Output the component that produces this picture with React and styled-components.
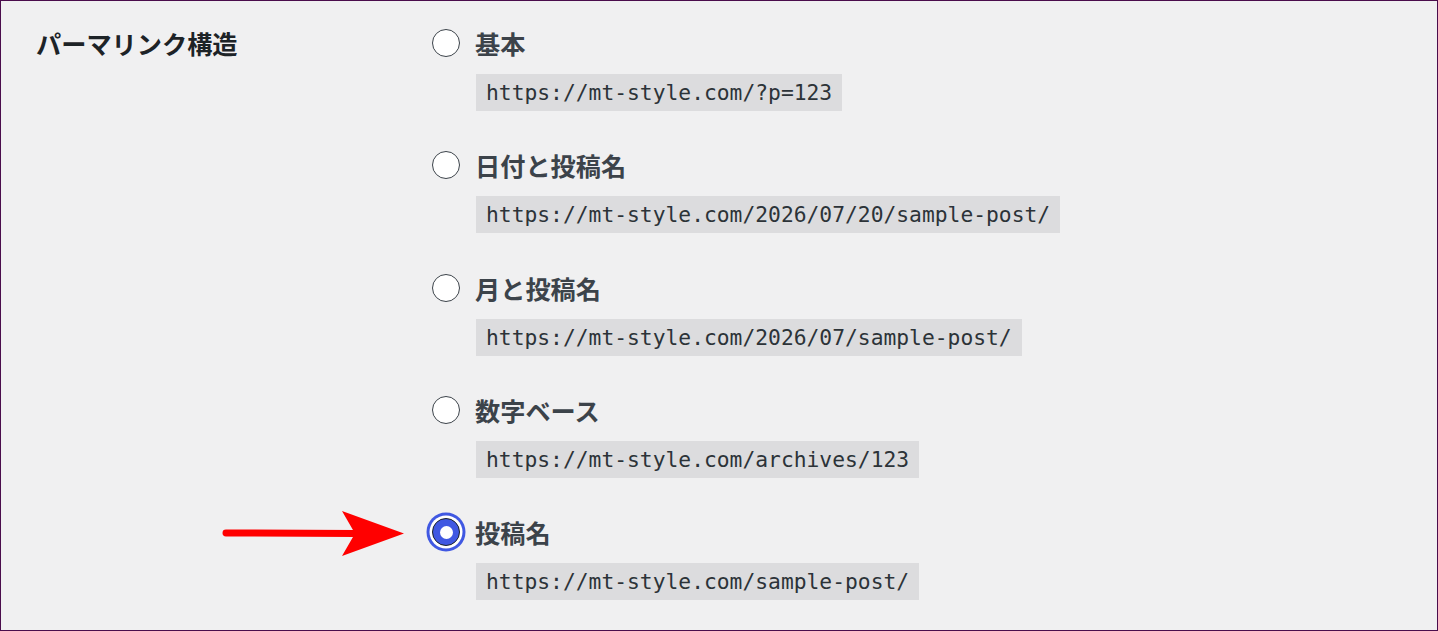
import React from "react";
import styled, { createGlobalStyle } from "styled-components";

const Global = createGlobalStyle`
  html, body { margin: 0; padding: 0; background: #f0f0f1; }
  * { box-sizing: border-box; }
`;

const Frame = styled.div`
  width: 1438px;
  height: 631px;
  border: 1px solid #4a0d4c;
  background: #f0f0f1;
  display: grid;
  grid-template-columns: 396px 1fr;
  padding: 22px 0 0 35px;
  font-family: "Noto Sans CJK JP", "Noto Sans", sans-serif;
  position: relative;
  overflow: hidden;
`;

const Heading = styled.h2`
  margin: 0;
  font-size: 25.2px;
  font-weight: 700;
  color: #1d2327;
  line-height: 40px;
  height: 40px;
`;

const Options = styled.div`
  display: flex;
  flex-direction: column;
  gap: 34.25px;
`;

const Option = styled.div`
  display: flex;
  flex-direction: column;
  align-items: flex-start;
  gap: 11px;
`;

const LabelRow = styled.label`
  display: flex;
  align-items: center;
  gap: 15px;
  height: 40px;
  font-size: 25.2px;
  font-weight: 700;
  color: #3c434a;
  position: relative;
`;

const Radio = styled.span`
  width: 28px;
  height: 28px;
  border-radius: 50%;
  border: 1px solid ${(p) => (p.$checked ? "#1d2327" : "#3c434a")};
  background: ${(p) => (p.$checked ? "#4058e2" : "#fff")};
  box-shadow: ${(p) =>
    p.$checked ? "0 0 0 2.5px #fff, 0 0 0 5.5px #4058e2" : "none"};
  display: flex;
  align-items: center;
  justify-content: center;
  flex-shrink: 0;
  &::before {
    content: "";
    display: ${(p) => (p.$checked ? "block" : "none")};
    width: 13px;
    height: 13px;
    border-radius: 50%;
    background: #fff;
  }
`;

const Code = styled.code`
  display: block;
  margin-left: 44px;
  height: 37px;
  line-height: 37px;
  padding: 0 10px;
  background: #dcdcde;
  color: #2c3338;
  font-family: "DejaVu Sans Mono", "Liberation Mono", monospace;
  font-size: 21.3px;
  white-space: nowrap;
`;

const Arrow = styled.svg`
  position: absolute;
  left: -216px;
  top: -3px;
  overflow: visible;
`;

const options = [
  { label: "基本", url: "https://mt-style.com/?p=123" },
  { label: "日付と投稿名", url: "https://mt-style.com/2026/07/20/sample-post/" },
  { label: "月と投稿名", url: "https://mt-style.com/2026/07/sample-post/" },
  { label: "数字ベース", url: "https://mt-style.com/archives/123" },
  { label: "投稿名", url: "https://mt-style.com/sample-post/", checked: true },
];

export default function App() {
  return (
    <>
      <Global />
      <Frame>
        <Heading>パーマリンク構造</Heading>
        <Options>
          {options.map((o) => (
            <Option key={o.label}>
              <LabelRow>
                {o.checked && (
                  <Arrow width="190" height="46" viewBox="0 0 190 46">
                    <line x1="10" y1="24" x2="140" y2="24.5" stroke="#ff0000" strokeWidth="7" strokeLinecap="round" />
                    <polygon points="126,2 188,24.5 126,47 139,24.5" fill="#ff0000" />
                  </Arrow>
                )}
                <Radio $checked={o.checked} />
                {o.label}
              </LabelRow>
              <Code>{o.url}</Code>
            </Option>
          ))}
        </Options>
      </Frame>
    </>
  );
}
